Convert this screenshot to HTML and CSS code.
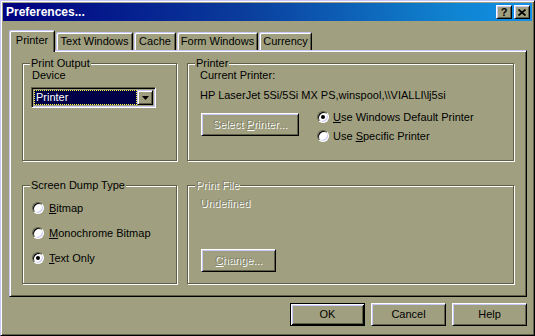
FILE: index.html
```html
<!DOCTYPE html>
<html>
<head>
<meta charset="utf-8">
<title>Preferences...</title>
<link rel="stylesheet" href="styles.css">
</head>
<body>
<div class="window">
  <div class="titlebar">
    <span class="title">Preferences...</span>
    <div class="title-btns">
      <div class="tbtn">?</div>
      <div class="tbtn"><svg width="8" height="7" viewBox="0 0 8 7"><path d="M0.5 0.5 L7.5 6.5 M7.5 0.5 L0.5 6.5" stroke="#000" stroke-width="1.7" fill="none"/></svg></div>
    </div>
  </div>

  <div class="tabs">
    <div class="tab active tab-printer">Printer</div>
    <div class="tab tab-text">Text Windows</div>
    <div class="tab tab-cache">Cache</div>
    <div class="tab tab-form">Form Windows</div>
    <div class="tab tab-currency">Currency</div>
  </div>

  <div class="panel">
    <div class="group output">
      <span class="group-label">Print Output</span>
      <div class="line device-label">Device</div>
      <div class="combo">
        <div class="combo-field"><span class="combo-text">Printer</span></div>
        <div class="combo-btn"><svg width="7" height="4" viewBox="0 0 7 4"><polygon points="0,0 7,0 3.5,4" fill="#000"/></svg></div>
      </div>
    </div>

    <div class="group printer">
      <span class="group-label">Printer</span>
      <div class="line">Current Printer:</div>
      <div class="line printer-name">HP LaserJet 5Si/5Si MX PS,winspool,\\VIALLI\lj5si</div>
      <div class="printer-row">
        <div class="btn disabled select-btn"><span>Select <u>P</u>rinter...</span></div>
        <div class="radio-list">
          <div class="option"><span class="radio checked"></span><span><u>U</u>se Windows Default Printer</span></div>
          <div class="option"><span class="radio"></span><span>Use <u>S</u>pecific Printer</span></div>
        </div>
      </div>
    </div>

    <div class="group dump">
      <span class="group-label">Screen Dump Type</span>
      <div class="dump-list">
        <div class="option"><span class="radio"></span><span><u>B</u>itmap</span></div>
        <div class="option"><span class="radio"></span><span><u>M</u>onochrome Bitmap</span></div>
        <div class="option"><span class="radio checked"></span><span><u>T</u>ext Only</span></div>
      </div>
    </div>

    <div class="group file">
      <span class="group-label disabled">Print File</span>
      <div class="line disabled">Undefined</div>
      <div class="btn disabled change-btn"><span><u>C</u>hange...</span></div>
    </div>
  </div>

  <div class="actions">
    <div class="btn default">OK</div>
    <div class="btn">Cancel</div>
    <div class="btn">Help</div>
  </div>
</div>
</body>
</html>
```

FILE: styles.css
```css
* { box-sizing: border-box; }

html, body {
  margin: 0;
  padding: 0;
}

body {
  width: 535px;
  height: 336px;
  overflow: hidden;
  background: #a0a080;
  font-family: "Liberation Sans", Arial, sans-serif;
  font-size: 11px;
  line-height: 13px;
  color: #000;
}

.window {
  width: 535px;
  height: 336px;
  display: flex;
  flex-direction: column;
  background: #a0a080;
  border: 1px solid;
  border-color: #c8c8f8 #000 #000 #c8c8f8;
  box-shadow: inset 1px 1px #fff, inset -1px -1px #606048;
  padding: 2px;
}

/* title bar */
.titlebar {
  flex: none;
  height: 18px;
  display: flex;
  align-items: center;
  padding: 0 2px 0 3px;
  background: linear-gradient(to right, #000080 0%, #0a3c9c 45%, #1084d0 85%, #1090e8 100%);
  color: #fff;
}

.title {
  flex: 1;
  font-weight: bold;
  font-size: 12px;
}

.title-btns {
  display: flex;
  gap: 2px;
}

.tbtn {
  width: 16px;
  height: 14px;
  display: flex;
  align-items: center;
  justify-content: center;
  background: #a0a080;
  border: 1px solid;
  border-color: #fff #000 #000 #fff;
  box-shadow: inset 1px 1px #c8c8f8, inset -1px -1px #606048;
  color: #000;
  font-weight: bold;
  font-size: 11px;
  line-height: 1;
}

/* tabs */
.tabs {
  flex: none;
  height: 20px;
  display: flex;
  align-items: flex-end;
  gap: 1px;
  margin: 9px 0 0 6px;
}

.tab {
  height: 18px;
  display: flex;
  align-items: center;
  justify-content: center;
  white-space: nowrap;
  background: #a0a080;
  border: 1px solid;
  border-bottom: none;
  border-color: #c8c8f8 #000 transparent #c8c8f8;
  border-radius: 2px 2px 0 0;
  box-shadow: inset 1px 1px #fff, inset -1px 0 #606048;
}

.tab.active {
  height: 22px;
  margin-bottom: -2px;
  padding-bottom: 2px;
  position: relative;
  z-index: 1;
}

.tab-printer { width: 46px; }
.tab-text { width: 77px; }
.tab-cache { width: 42px; }
.tab-form { width: 81px; }
.tab-currency { width: 53px; }

/* panel */
.panel {
  flex: none;
  width: 518px;
  height: 247px;
  margin-left: 6px;
  padding: 12px;
  display: grid;
  grid-template-columns: 155px 327px;
  grid-template-rows: 98px 99px;
  column-gap: 10px;
  row-gap: 24px;
  border: 1px solid;
  border-color: #c8c8f8 #000 #000 #c8c8f8;
  box-shadow: inset 1px 1px #fff, inset -1px -1px #606048;
}

.group {
  position: relative;
  border: 1px solid #606048;
  box-shadow: inset 1px 1px #fff, 1px 1px #fff;
}

.group-label {
  position: absolute;
  top: -7px;
  left: 7px;
  padding: 0 1px;
  background: #a0a080;
  line-height: 13px;
  white-space: nowrap;
}

.line {
  height: 13px;
  white-space: nowrap;
}

.disabled {
  color: #84846a;
  text-shadow: 1px 1px #fff;
}

/* print output */
.output {
  padding: 5px 0 0 8px;
}

.device-label {
  padding-left: 1px;
}

.combo {
  width: 125px;
  height: 21px;
  margin-top: 5px;
  display: flex;
  padding: 2px;
  background: #a0a080;
  border: 1px solid;
  border-color: #606048 #fff #fff #606048;
  box-shadow: inset 1px 1px #000, inset -1px -1px #c8c8f8;
}

.combo-field {
  flex: 1;
  display: flex;
  align-items: center;
  background: #000048;
  color: #fff;
  outline: 1px dotted #ffff40;
  outline-offset: -1px;
  padding-left: 2px;
}

.combo-btn {
  width: 16px;
  flex: none;
  display: flex;
  align-items: center;
  justify-content: center;
  background: #a0a080;
  border: 1px solid;
  border-color: #c8c8f8 #000 #000 #c8c8f8;
  box-shadow: inset 1px 1px #fff, inset -1px -1px #606048;
}

/* printer */
.printer {
  padding: 5px 0 0 12px;
}

.printer-name {
  margin-top: 7px;
}

.printer-row {
  display: flex;
  margin-top: 8px;
}

.select-btn {
  width: 98px;
  margin: 3px 0 0 1px;
}

.radio-list {
  display: flex;
  flex-direction: column;
  gap: 5px;
  margin-left: 18px;
}

.option {
  height: 14px;
  display: flex;
  align-items: center;
  gap: 4px;
  white-space: nowrap;
}

.radio {
  width: 12px;
  height: 12px;
  flex: none;
  display: flex;
  align-items: center;
  justify-content: center;
  border-radius: 50%;
  background: #fff;
  border: 1px solid;
  border-color: #606048 #fff #fff #606048;
  box-shadow: inset 1px 1px #000, inset -1px -1px #c8c8f8;
}

.radio.checked::after {
  content: "";
  width: 4px;
  height: 4px;
  border-radius: 50%;
  background: #000;
}

/* screen dump */
.dump {
  padding: 15px 0 0 9px;
}

.dump-list {
  display: flex;
  flex-direction: column;
  gap: 11px;
}

.dump-list .option {
  gap: 5px;
}

/* print file */
.file {
  padding: 11px 0 0 12px;
}

.change-btn {
  width: 75px;
  margin: 39px 0 0 1px;
}

/* buttons */
.btn {
  height: 23px;
  display: flex;
  align-items: center;
  justify-content: center;
  white-space: nowrap;
  background: #a0a080;
  border: 1px solid;
  border-color: #fff #000 #000 #fff;
  box-shadow: inset 1px 1px #c8c8f8, inset -1px -1px #606048;
}

.actions {
  flex: none;
  display: flex;
  justify-content: flex-end;
  gap: 6px;
  margin-top: 6px;
  padding-right: 5px;
}

.actions .btn {
  width: 75px;
}

.btn.default {
  border-color: #000;
  box-shadow: inset 1px 1px #fff, inset -1px -1px #000, inset 2px 2px #c8c8f8, inset -2px -2px #606048;
}
```
